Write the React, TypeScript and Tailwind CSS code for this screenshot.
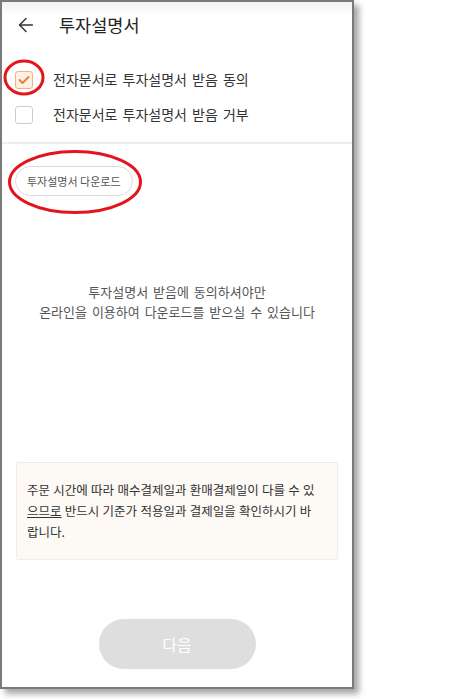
import { ArrowLeft } from 'lucide-react';

const font = { fontFamily: '"Noto Sans CJK KR", "Noto Sans", sans-serif' };

function CheckRow({ checked, label }: { checked: boolean; label: string }) {
  return (
    <div className="flex h-[35px] items-center">
      <div
        className={
          checked
            ? 'flex h-[18px] w-[18px] items-center justify-center rounded-[3px] border border-[#f5b27f] bg-[#fdf1e6]'
            : 'h-[18px] w-[18px] rounded-[3px] border border-[#c9ccd3] bg-white'
        }
      >
        {checked && (
          <svg width="12" height="10" viewBox="0 0 12 10" fill="none">
            <path d="M1.5 5 L4.5 8 L10.5 2" stroke="#f07a2a" strokeWidth="1.8" strokeLinecap="round" strokeLinejoin="round" />
          </svg>
        )}
      </div>
      <span className="ml-[20px] text-[14px] text-[#333] [word-spacing:2px]">{label}</span>
    </div>
  );
}

export default function App() {
  return (
    <div className="min-h-[699px] bg-white" style={font}>
      <div className="relative flex h-[689px] w-[354px] flex-col border-2 border-[#7a7a7a] bg-white shadow-[5px_5px_6px_rgba(0,0,0,0.35)]">
        <div className="flex h-[46px] items-center bg-gradient-to-b from-[#f2f2f2] to-white to-[30%] pl-[13px]">
          <ArrowLeft size={22} strokeWidth={1.6} className="text-[#333]" />
          <span className="ml-[22px] text-[17.5px] text-[#222]">투자설명서</span>
        </div>

        <div className="mt-[14px] px-[13px]">
          <CheckRow checked label="전자문서로 투자설명서 받음 동의" />
          <CheckRow checked={false} label="전자문서로 투자설명서 받음 거부" />
        </div>

        <div className="mt-[10px] h-[2px] bg-[#ededed]" />

        <div className="mt-[22px] px-[13px]">
          <button className="h-[30px] rounded-full border border-[#dcdcdc] bg-white px-[11px] text-[11px] text-[#555]">
            투자설명서 다운로드
          </button>
        </div>

        <div className="mt-[86px] text-center text-[13px] leading-[20px] text-[#555] [word-spacing:2px]">
          <p>투자설명서 받음에 동의하셔야만</p>
          <p>온라인을 이용하여 다운로드를 받으실 수 있습니다</p>
        </div>

        <div className="mx-[14px] mt-[140px] rounded-[2px] border border-[#f4ede6] bg-[#fdf9f5] px-[10px] pb-[17px] pt-[16px] text-[12.5px] leading-[21px] text-[#333] [word-spacing:0.5px]">
          주문 시간에 따라 매수결제일과 환매결제일이 다를 수 있
          <br />
          <span className="underline">으므로</span> 반드시 기준가 적용일과 결제일을 확인하시기 바
          <br />
          랍니다.
        </div>

        <div className="mt-[59px] flex justify-center">
          <button className="h-[50px] w-[157px] rounded-full bg-[#dedede] text-[16px] text-white">다음</button>
        </div>

        <svg className="absolute left-[1px] top-[57px]" width="42" height="37" viewBox="0 0 42 37">
          <ellipse cx="21" cy="18.5" rx="19" ry="16.5" fill="none" stroke="#e3141c" strokeWidth="3" />
        </svg>
        <svg className="absolute left-[5px] top-[147px]" width="136" height="66" viewBox="0 0 136 66">
          <ellipse cx="68" cy="33" rx="65.5" ry="30.5" fill="none" stroke="#e3141c" strokeWidth="3" />
        </svg>
      </div>
    </div>
  );
}
